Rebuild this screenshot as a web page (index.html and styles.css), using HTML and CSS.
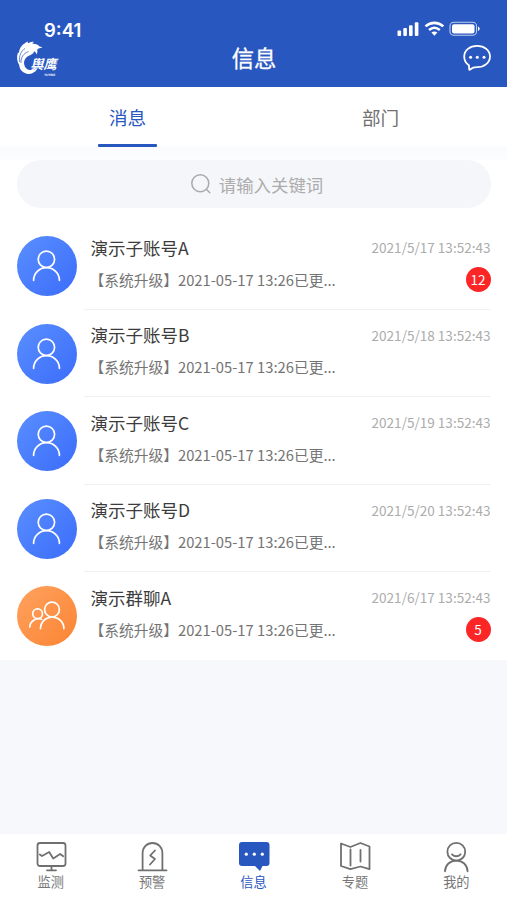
FILE: index.html
```html
<!DOCTYPE html>
<html lang="zh-CN">
<head>
    <meta charset="UTF-8">
    <meta name="viewport" content="width=device-width, initial-scale=1.0">
    <title>信息</title>
    <link rel="stylesheet" href="styles.css">
</head>
<body>
    <!-- shared avatar icons -->
    <svg class="sprite">
        <symbol id="user" viewBox="0 0 60 60">
            <circle cx="29.4" cy="23.3" r="8.2"/>
            <path d="M16.6 44.3a12.900 12.700 0 0 1 25.800 0"/>
        </symbol>
        <symbol id="group" viewBox="0 0 60 60">
            <circle cx="35" cy="23.500" r="7.400"/>
            <path d="M23.500 42.600a11.700 11.500 0 0 1 23.400 0"/>
            <circle cx="20.600" cy="27.700" r="4.900"/>
            <path d="M12.800 41a9 8.500 0 0 1 11.800-7.800"/>
        </symbol>
    </svg>

    <div class="app">
        <header class="header">
            <div class="status">
                <span class="clock">9:41</span>
                <svg class="status-icons" width="84" height="18" viewBox="0 0 84 18">
                    <rect x="0.500" y="9.500" width="3.600" height="5.500" rx="1"/>
                    <rect x="6.300" y="7" width="3.600" height="8" rx="1"/>
                    <rect x="12" y="4.300" width="3.600" height="10.700" rx="1"/>
                    <rect x="17.800" y="1.200" width="3.600" height="13.800" rx="1"/>
                    <g class="line">
                        <path d="M28.500 5.400c5.300-4.700 12.500-4.700 17.800 0" stroke-width="2.600"/>
                        <path d="M32 9c3.300-2.700 7.500-2.700 10.800 0" stroke-width="2.500"/>
                        <rect x="53" y="1.300" width="26.500" height="13" rx="3.800" stroke-width="1.100" opacity=".7"/>
                    </g>
                    <path d="M34.400 11.600c1.800-1.400 4.200-1.400 6 0l-3 3.100z"/>
                    <rect x="55" y="3.200" width="22.500" height="9.200" rx="2"/>
                    <path d="M81 5.600c2.200.8 2.200 3.600 0 4.400z"/>
                </svg>
            </div>
            <div class="navbar">
                <svg class="logo" width="44" height="36" viewBox="0 0 44 36">
                    <path d="M7 4.500c2-.5 3-3 5-3-.5 1-.3 1.500 0 1.800 2-1.300 4-1.800 6-1.300-1 .4-1.400.9-1.600 1.500 3.600.3 6.200 1.500 7.400 3.300 1-.2 1.900.3 2.300 1.300-2.700-.4-4.200.4-5 2 .8 1 .3 3-.8 4.400-.3-1.800-1-2.800-2.300-3.200-.2 1.800-1.500 3-3.500 3.800-4.600 1.800-7 5-6.300 9.200.6 3.700 3.300 6 7.300 5.800 2.500-.2 4.600-1.300 6.500-2.800-1.700 4.300-5.300 6.800-9.500 6.600C7.500 33.600 3.500 30 3.200 25 1 21.500.4 16.500 2 12.500l.8.500C3.200 9.500 4.700 6.500 7 4.500z"/>
                    <path class="cut" d="M3.600 22C2.800 16 5 11 9 8.500M5 23C4.500 17.500 7.500 13.500 12.500 11.500"/>
                    <text x="14.500" y="28.500" textLength="26" lengthAdjust="spacingAndGlyphs">舆鹰</text>
                    <text class="tiny" x="28" y="35.800">YUYING</text>
                </svg>
                <h1 class="title">信息</h1>
                <svg class="chat" width="30" height="28" viewBox="0 0 30 28">
                    <path d="M15.100 1.800c7.300 0 12.900 4.600 12.900 10.700S22.400 23.200 15.100 23.200c-1.800 0-3 .2-4 .5L7.300 25.900l-.4-4.700C3.900 19.300 2.200 16 2.200 12.500 2.200 6.400 7.800 1.800 15.100 1.800z"/>
                    <g class="dots"><circle cx="8.600" cy="13.200" r="1.500"/><circle cx="15.300" cy="13.200" r="1.500"/><circle cx="22" cy="13.200" r="1.500"/></g>
                </svg>
            </div>
        </header>

        <nav class="tabs">
            <a class="tab active">消息</a>
            <a class="tab">部门</a>
        </nav>

        <div class="search-wrap">
            <div class="search">
                <svg width="22" height="22" viewBox="0 0 22 22"><circle cx="10.300" cy="10.300" r="8.500"/><path d="M16.300 16.300l3.500 3.500"/></svg>
                <span>请输入关键词</span>
            </div>
        </div>

        <main class="list">
            <div class="item">
                <div class="avatar"><svg><use href="#user"/></svg></div>
                <div class="info">
                    <div class="row"><span class="name">演示子账号A</span><span class="time">2021/5/17 13:52:43</span></div>
                    <div class="row"><span class="msg">【系统升级】2021-05-17 13:26已更...</span><span class="badge">12</span></div>
                </div>
            </div>
            <div class="item">
                <div class="avatar"><svg><use href="#user"/></svg></div>
                <div class="info">
                    <div class="row"><span class="name">演示子账号B</span><span class="time">2021/5/18 13:52:43</span></div>
                    <div class="row"><span class="msg">【系统升级】2021-05-17 13:26已更...</span></div>
                </div>
            </div>
            <div class="item">
                <div class="avatar"><svg><use href="#user"/></svg></div>
                <div class="info">
                    <div class="row"><span class="name">演示子账号C</span><span class="time">2021/5/19 13:52:43</span></div>
                    <div class="row"><span class="msg">【系统升级】2021-05-17 13:26已更...</span></div>
                </div>
            </div>
            <div class="item">
                <div class="avatar"><svg><use href="#user"/></svg></div>
                <div class="info">
                    <div class="row"><span class="name">演示子账号D</span><span class="time">2021/5/20 13:52:43</span></div>
                    <div class="row"><span class="msg">【系统升级】2021-05-17 13:26已更...</span></div>
                </div>
            </div>
            <div class="item">
                <div class="avatar orange"><svg><use href="#group"/></svg></div>
                <div class="info">
                    <div class="row"><span class="name">演示群聊A</span><span class="time">2021/6/17 13:52:43</span></div>
                    <div class="row"><span class="msg">【系统升级】2021-05-17 13:26已更...</span><span class="badge">5</span></div>
                </div>
            </div>
        </main>

        <footer class="tabbar">
            <a class="nav">
                <svg width="32" height="32" viewBox="0 0 32 32"><rect x="2.500" y="2" width="28" height="23" rx="2.500"/><path d="M4.800 13.500l2.200 1.500 7.200-4 4 6.500 7-4.500 3 2.200M16.500 25v4.200M12 29.300h9"/></svg>
                <span>监测</span>
            </a>
            <a class="nav">
                <svg width="32" height="32" viewBox="0 0 32 32"><path d="M2.500 29.300h28M6.600 29V12.300C6.600 6.300 10.900 2 16.500 2s9.900 4.300 9.900 10.300V29M19 9.500l-4.800 5 4.800 3.500-5 5.500"/></svg>
                <span>预警</span>
            </a>
            <a class="nav active">
                <svg width="32" height="32" viewBox="0 0 32 32"><path class="solid" d="M4 1h24.500a3 3 0 0 1 3 3v18a3 3 0 0 1-3 3H24.500l-2.500 5L17 25H4a3 3 0 0 1-3-3V4a3 3 0 0 1 3-3z"/><g class="dots"><circle cx="8.300" cy="13.200" r="1.600"/><circle cx="16.300" cy="13.200" r="1.600"/><circle cx="24.300" cy="13.200" r="1.600"/></g></svg>
                <span>信息</span>
            </a>
            <a class="nav">
                <svg width="32" height="32" viewBox="0 0 32 32"><path d="M2 2.500l9.400 3.500 10-4 9.100 3.500v22.700l-9.100-2.700-10 2.700L2 25zM11.500 8.500v16M21.500 9v11.500"/></svg>
                <span>专题</span>
            </a>
            <a class="nav">
                <svg width="32" height="32" viewBox="0 0 32 32"><circle cx="16.300" cy="10.700" r="8.900"/><path d="M5 30.300c.3-6.500 5-10.700 11.300-10.700s11 4.200 11.300 10.700M12 13.300c2.500 2.600 6.100 2.600 8.600 0"/></svg>
                <span>我的</span>
            </a>
        </footer>
    </div>
</body>
</html>
```

FILE: styles.css
```css
* {
    box-sizing: border-box;
}
body {
    margin: 0;
    font-family: "Noto Sans CJK SC", sans-serif;
    background-color: #f6f8fb;
}
svg {
    display: block;
    fill: none;
}
.sprite {
    width: 0;
    height: 0;
    position: absolute;
}
.app {
    height: 900px;
    display: flex;
    flex-direction: column;
    overflow: hidden;
}

/* header */
.header {
    height: 87px;
    flex-shrink: 0;
    background-color: #2957c0;
    color: white;
}
.status {
    height: 40px;
    padding: 20px 26px 0 44px;
    display: flex;
    justify-content: space-between;
}
.clock {
    font-family: Inter, sans-serif;
    font-size: 18.5px;
    font-weight: 600;
    line-height: 20px;
}
.status-icons {
    margin-top: 1px;
    fill: white;
}
.status-icons .line {
    fill: none;
    stroke: white;
}
.navbar {
    height: 36px;
    padding: 0 15px 0 16px;
    display: grid;
    grid-template-columns: 1fr auto 1fr;
    align-items: center;
}
.logo {
    fill: white;
}
.logo .cut {
    fill: none;
    stroke: #2957c0;
    stroke-width: .7;
}
.logo text {
    font-size: 13px;
    font-weight: bold;
    font-style: italic;
}
.logo .tiny {
    font-size: 3px;
}
.title {
    margin: 0;
    font-size: 22.3px;
    font-weight: 400;
    line-height: 34px;
    padding-bottom: 2px;
    -webkit-text-stroke: .3px white;
}
.chat {
    justify-self: end;
    stroke: white;
    stroke-width: 1.8;
    stroke-linejoin: round;
}
.dots {
    fill: white;
    stroke: none;
}

/* tabs */
.tabs {
    height: 60px;
    flex-shrink: 0;
    display: flex;
    padding-left: 1px;
    background-color: white;
}
.tab {
    flex: 1;
    display: flex;
    flex-direction: column;
    align-items: center;
    justify-content: space-between;
    padding-top: 15px;
    font-size: 18.6px;
    line-height: 30px;
    color: #707070;
}
.tab.active {
    color: #2957c0;
}
.tab.active::after {
    content: "";
    width: 59px;
    height: 3px;
    border-radius: 1px;
    background-color: #2957c0;
}

/* search */
.search-wrap {
    height: 75px;
    flex-shrink: 0;
    padding: 13px 16px 0 17px;
    background: linear-gradient(#fafbfd, #fcfdfe 13px, white 13px);
}
.search {
    height: 48px;
    border-radius: 24px;
    background-color: #f5f6fa;
    display: flex;
    align-items: center;
    justify-content: center;
    gap: 7px;
    padding-left: 5px;
    font-size: 17.4px;
    color: #acacac;
}
.search svg {
    stroke: #aaa;
    stroke-width: 1.5;
    stroke-linecap: round;
}

/* list */
.list {
    background-color: white;
    padding: 0 16px 0 17px;
}
.item {
    height: 87.6px;
    display: flex;
}
.avatar {
    width: 60px;
    height: 60px;
    margin: 14px 7px 0 0;
    flex-shrink: 0;
    border-radius: 50%;
    background: linear-gradient(135deg, #5a8fff, #3b6cfa);
}
.avatar.orange {
    background: linear-gradient(135deg, #ffa25f, #fb8433);
}
.avatar svg {
    width: 60px;
    height: 60px;
    stroke: white;
    stroke-width: 1.7;
    stroke-linecap: round;
}
.info {
    flex: 1;
    padding: 9px .5px 0 6.5px;
    border-bottom: 1px solid #f1f1f2;
}
.item:last-child .info {
    border-bottom: none;
}
.row {
    height: 32px;
    display: flex;
    justify-content: space-between;
    align-items: center;
    white-space: nowrap;
}
.name {
    font-size: 17.5px;
    color: #3c3c3c;
}
.time {
    font-size: 13.55px;
    color: #acacac;
}
.msg {
    margin-left: -1px;
    font-size: 14.75px;
    color: #747474;
}
.badge {
    width: 25px;
    height: 25px;
    border-radius: 50%;
    background-color: #fc2626;
    color: white;
    font-size: 13.5px;
    line-height: 25px;
    text-align: center;
}

/* bottom bar */
.tabbar {
    height: 66px;
    margin-top: auto;
    flex-shrink: 0;
    display: flex;
    background-color: white;
}
.nav {
    flex: 1;
    padding-top: 7px;
    display: flex;
    flex-direction: column;
    align-items: center;
    font-size: 13.2px;
    line-height: 18px;
    color: #777;
}
.nav svg {
    stroke: #707070;
    stroke-width: 1.8;
    stroke-linejoin: round;
    stroke-linecap: round;
}
.nav.active {
    color: #2957c0;
}
.nav .solid {
    fill: #2957c0;
    stroke: none;
}
.nav .dots {
    stroke: none;
}
```
